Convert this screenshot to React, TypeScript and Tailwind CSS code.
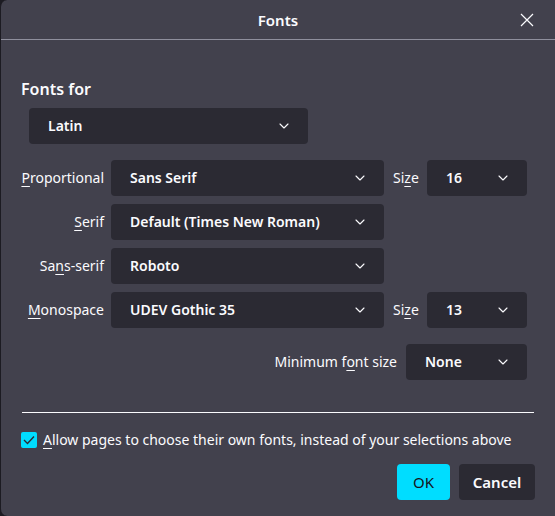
import React from "react";

function Chevron() {
  return (
    <svg width="10" height="6" viewBox="0 0 10 6" fill="none" className="shrink-0">
      <path d="M1 1l4 4 4-4" stroke="#fbfbfe" strokeWidth="1.1" strokeLinecap="round" strokeLinejoin="round" />
    </svg>
  );
}

function Select({ value, width }: { value: string; width: string }) {
  return (
    <div
      className={`flex h-9 items-center justify-between rounded-[4px] bg-[#2b2a33] pl-[19px] pr-[19px] font-semibold ${width}`}
    >
      <span>{value}</span>
      <Chevron />
    </div>
  );
}

function Key({ children }: { children: React.ReactNode }) {
  return <span className="underline underline-offset-[3px] decoration-1">{children}</span>;
}

interface FontRow {
  label: React.ReactNode;
  value: string;
  size?: string;
}

const rows: FontRow[] = [
  { label: <><Key>P</Key>roportional</>, value: "Sans Serif", size: "16" },
  { label: <><Key>S</Key>erif</>, value: "Default (Times New Roman)" },
  { label: <>Sa<Key>n</Key>s-serif</>, value: "Roboto" },
  { label: <><Key>M</Key>onospace</>, value: "UDEV Gothic 35", size: "13" },
];

export default function App() {
  return (
    <div className="min-h-screen bg-[#1c1b22]">
      <div
        className="flex h-[516px] w-[555px] flex-col overflow-hidden rounded-l-[7px] border-l border-[#1c1b22] bg-[#42414d] text-[14px] leading-[20px] text-[#fbfbfe]"
        style={{ fontFamily: '"Noto Sans", "Open Sans", sans-serif' }}
      >
        {/* title bar */}
        <div className="relative flex h-10 shrink-0 items-center justify-center border-b border-[#8f8f9d]">
          <span className="text-[15px] font-semibold">Fonts</span>
          <button className="absolute right-[21px] top-[13px]" aria-label="Close">
            <svg width="14" height="14" viewBox="0 0 14 14">
              <path d="M1 1l12 12M13 1L1 13" stroke="#fbfbfe" strokeWidth="1.2" />
            </svg>
          </button>
        </div>

        <div className="flex flex-1 flex-col px-[20px]">
          <div className="mt-[38px] text-[16px] font-semibold leading-[22px]">Fonts for</div>
          <div className="ml-[8px] mt-[8px]">
            <Select value="Latin" width="w-[279px]" />
          </div>

          <div className="mt-4 flex flex-col gap-2 pr-[8px]">
            {rows.map((row, i) => (
              <div key={i} className="flex items-center">
                <div className="w-[83px] text-right">{row.label}</div>
                <div className="ml-[7px]">
                  <Select value={row.value} width="w-[273px]" />
                </div>
                {row.size && (
                  <>
                    <div className="ml-[9px]">
                      Si<Key>z</Key>e
                    </div>
                    <div className="ml-auto">
                      <Select value={row.size} width="w-[100px]" />
                    </div>
                  </>
                )}
              </div>
            ))}
          </div>

          <div className="mt-4 flex items-center justify-end pr-[8px]">
            <span>
              Minimum f<Key>o</Key>nt size
            </span>
            <div className="ml-[9px]">
              <Select value="None" width="w-[121px]" />
            </div>
          </div>

          <div className="ml-px mr-[1px] mt-[32px] h-px bg-[#fbfbfe]" />

          <label className="mt-[17px] flex items-center gap-[6px]">
            <span className="flex h-4 w-4 shrink-0 items-center justify-center rounded-[2px] bg-[#00ddff]">
              <svg width="12" height="10" viewBox="0 0 12 10">
                <path d="M1 5l3.5 3.5L11 1.5" stroke="#2b2a33" strokeWidth="1.4" fill="none" />
              </svg>
            </span>
            <span className="whitespace-nowrap">
              <Key>A</Key>llow pages to choose their own fonts, instead of your selections above
            </span>
          </label>

          <div className="mt-[14px] flex justify-end gap-[9px]">
            <button className="h-9 w-[53px] rounded-[4px] bg-[#00ddff] text-[15px] text-[#15141a]">OK</button>
            <button className="h-9 w-[76px] rounded-[4px] bg-[#2b2a33] text-[15px] font-semibold">Cancel</button>
          </div>
        </div>
      </div>
    </div>
  );
}
